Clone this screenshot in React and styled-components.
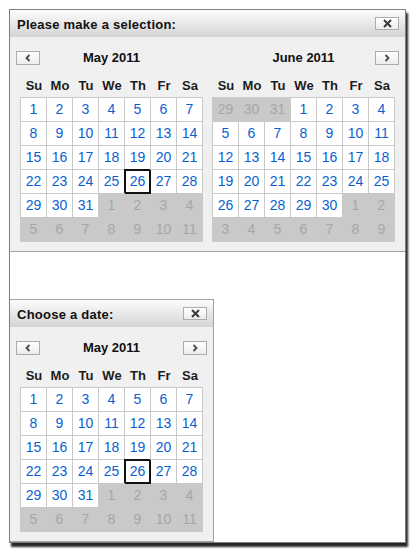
import React from "react";
import styled, { createGlobalStyle } from "styled-components";

const GlobalStyle = createGlobalStyle`
  body {
    margin: 0;
    background: #ffffff;
    font-family: "Liberation Sans", Arial, sans-serif;
  }
`;

const Page = styled.div`
  padding: 9px;
`;

const Frame = styled.div`
  width: 397px;
  box-sizing: border-box;
  border: 1px solid #7d7d7d;
  background: #ffffff;
  box-shadow: 2px 4px 2px rgba(0, 0, 0, 0.85);
  display: flex;
  flex-direction: column;
  align-items: flex-start;
`;

const Popup = styled.div`
  background: #f0f0f0;
  border-bottom: 1px solid #a2a2a2;
  ${(p) =>
    p.$single &&
    `
    border-top: 1px solid #a2a2a2;
    border-right: 1px solid #a2a2a2;
  `}
`;

const Spacer = styled.div`
  height: 47px;
`;

const TitleBar = styled.div`
  height: 27px;
  padding: 0 6px 0 6px;
  display: flex;
  align-items: center;
  justify-content: space-between;
  background: linear-gradient(#fdfdfd, #d3d3d3);
`;

const TitleText = styled.span`
  font-weight: bold;
  font-size: 13px;
  color: #111111;
  padding: 2px 0 0 1px;
  letter-spacing: 0.25px;
`;

const SmallButton = styled.div`
  width: 24px;
  height: ${(p) => (p.$close ? "13px" : "14px")};
  box-sizing: border-box;
  border: 1px solid #ababab;
  background: linear-gradient(#ffffff, #ececec);
  display: flex;
  align-items: center;
  justify-content: center;
  visibility: ${(p) => (p.$hidden ? "hidden" : "visible")};
`;

const Body = styled.div`
  padding: 12px 10px 9px 10px;
  display: flex;
  gap: 9px;
`;

const Calendar = styled.div`
  width: 183px;
  display: flex;
  flex-direction: column;
`;

const NavRow = styled.div`
  height: 14px;
  margin: 0 -4px 13px -4px;
  display: grid;
  grid-template-columns: 24px 1fr 24px;
  align-items: center;
`;

const MonthTitle = styled.div`
  text-align: center;
  font-weight: bold;
  font-size: 13px;
  line-height: 16px;
  padding-top: 1px;
  color: #111111;
`;

const DayHeaders = styled.div`
  display: grid;
  grid-template-columns: repeat(7, 26px);
  padding-left: 1px;
  height: 21px;
  line-height: 20px;
  font-weight: bold;
  font-size: 13px;
  text-align: center;
  color: #1c1c1c;
`;

const Grid = styled.div`
  display: grid;
  grid-template-columns: repeat(7, 26px);
  width: 183px;
  box-sizing: border-box;
  border-top: 1px solid #c9c9c9;
  border-left: 1px solid #c9c9c9;
`;

const Cell = styled.div`
  height: 24px;
  box-sizing: border-box;
  border-right: 1px solid #c9c9c9;
  border-bottom: 1px solid #c9c9c9;
  background: ${(p) => (p.$muted ? "#c9c9c9" : "#ffffff")};
  color: ${(p) => (p.$muted ? "#a6a6a6" : "#0a5fd0")};
  font-size: 14px;
  line-height: 23px;
  text-align: center;
  position: relative;
  ${(p) =>
    p.$today &&
    `
    z-index: 1;
    border-color: #111111;
    box-shadow: -1px -1px 0 #111111, inset 1px 1px 0 #111111, inset -1px -1px 0 #111111;
  `}
`;

const DAY_NAMES = ["Su", "Mo", "Tu", "We", "Th", "Fr", "Sa"];

const buildDays = (year, month) => {
  const first = new Date(year, month, 1).getDay();
  const start = new Date(year, month, 1 - first);
  const days = [];
  for (let i = 0; i < 42; i++) {
    const d = new Date(start.getFullYear(), start.getMonth(), start.getDate() + i);
    days.push({ day: d.getDate(), muted: d.getMonth() !== month, key: i });
  }
  return days;
};

const MONTH_NAMES = ["January", "February", "March", "April", "May", "June"];

const Chevron = ({ left }) => (
  <svg width="6" height="8" viewBox="0 0 6 8">
    <polyline
      points={left ? "4.5,1 1.5,4 4.5,7" : "1.5,1 4.5,4 1.5,7"}
      fill="none"
      stroke="#4a4a4a"
      strokeWidth="1.8"
    />
  </svg>
);

const CloseIcon = () => (
  <svg width="9" height="9" viewBox="0 0 9 9">
    <path d="M1 1 L8 8 M8 1 L1 8" stroke="#3a3a3a" strokeWidth="2" />
  </svg>
);

const MonthView = ({ year, month, showPrev, showNext, today }) => {
  const days = buildDays(year, month);
  return (
    <Calendar>
      <NavRow>
        <SmallButton $hidden={!showPrev}>
          <Chevron left />
        </SmallButton>
        <MonthTitle>
          {MONTH_NAMES[month]} {year}
        </MonthTitle>
        <SmallButton $hidden={!showNext}>
          <Chevron />
        </SmallButton>
      </NavRow>
      <DayHeaders>
        {DAY_NAMES.map((name) => (
          <div key={name}>{name}</div>
        ))}
      </DayHeaders>
      <Grid>
        {days.map((each) => (
          <Cell
            key={each.key}
            $muted={each.muted}
            $today={!each.muted && each.day === today}
          >
            {each.day}
          </Cell>
        ))}
      </Grid>
    </Calendar>
  );
};

const App = () => {
  return (
    <Page>
      <GlobalStyle />
      <Frame>
        <Popup>
          <TitleBar>
            <TitleText>Please make a selection:</TitleText>
            <SmallButton $close>
              <CloseIcon />
            </SmallButton>
          </TitleBar>
          <Body>
            <MonthView year={2011} month={4} showPrev today={26} />
            <MonthView year={2011} month={5} showNext />
          </Body>
        </Popup>
        <Spacer />
        <Popup $single>
          <TitleBar>
            <TitleText>Choose a date:</TitleText>
            <SmallButton $close>
              <CloseIcon />
            </SmallButton>
          </TitleBar>
          <Body>
            <MonthView year={2011} month={4} showPrev showNext today={26} />
          </Body>
        </Popup>
      </Frame>
    </Page>
  );
};

export default App;
